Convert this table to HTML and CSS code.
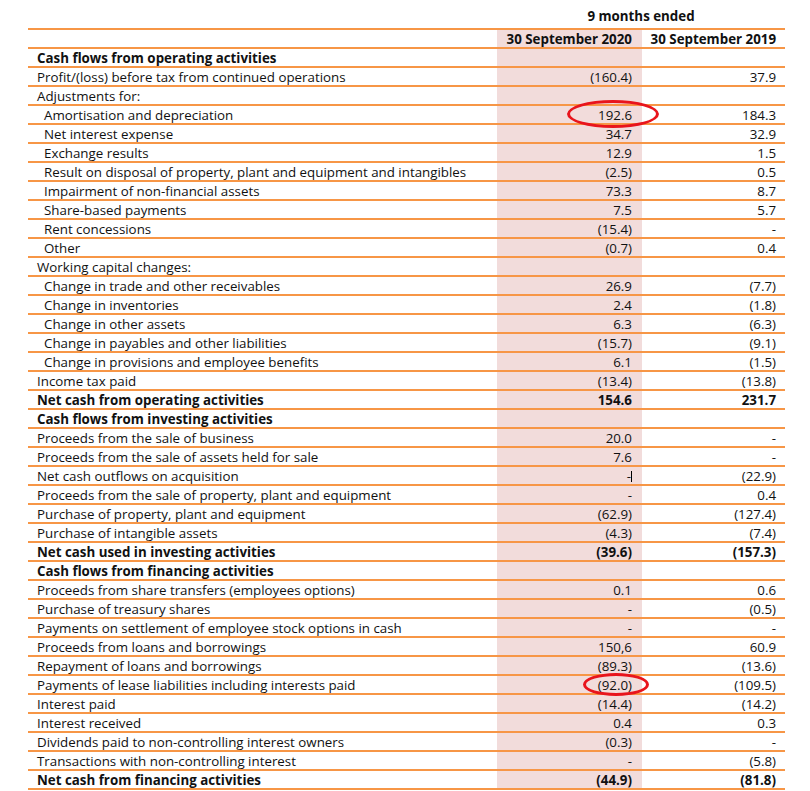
FILE: index.html
```html
<!DOCTYPE html>
<html>
<head>
<meta charset="utf-8">
<link rel="stylesheet" href="styles.css">
</head>
<body>
<div class="page">
<table class="cf">
<colgroup><col class="c-label"><col class="c-cur"><col class="c-prev"></colgroup>
<thead>
<tr class="h1"><th></th><th colspan="2" class="span">9 months ended</th></tr>
<tr class="h2"><th></th><th class="num cur">30 September 2020</th><th class="num">30 September 2019</th></tr>
</thead>
<tbody>
<tr class="b"><td>Cash flows from operating activities</td><td class="cur"></td><td></td></tr>
<tr><td>Profit/(loss) before tax from continued operations</td><td class="num cur">(160.4)</td><td class="num">37.9</td></tr>
<tr><td>Adjustments for:</td><td class="cur"></td><td></td></tr>
<tr><td class="ind">Amortisation and depreciation</td><td class="num cur">192.6</td><td class="num">184.3</td></tr>
<tr><td class="ind">Net interest expense</td><td class="num cur">34.7</td><td class="num">32.9</td></tr>
<tr><td class="ind">Exchange results</td><td class="num cur">12.9</td><td class="num">1.5</td></tr>
<tr><td class="ind">Result on disposal of property, plant and equipment and intangibles</td><td class="num cur">(2.5)</td><td class="num">0.5</td></tr>
<tr><td class="ind">Impairment of non-financial assets</td><td class="num cur">73.3</td><td class="num">8.7</td></tr>
<tr><td class="ind">Share-based payments</td><td class="num cur">7.5</td><td class="num">5.7</td></tr>
<tr><td class="ind">Rent concessions</td><td class="num cur">(15.4)</td><td class="num">-</td></tr>
<tr><td class="ind">Other</td><td class="num cur">(0.7)</td><td class="num">0.4</td></tr>
<tr><td>Working capital changes:</td><td class="cur"></td><td></td></tr>
<tr><td class="ind">Change in trade and other receivables</td><td class="num cur">26.9</td><td class="num">(7.7)</td></tr>
<tr><td class="ind">Change in inventories</td><td class="num cur">2.4</td><td class="num">(1.8)</td></tr>
<tr><td class="ind">Change in other assets</td><td class="num cur">6.3</td><td class="num">(6.3)</td></tr>
<tr><td class="ind">Change in payables and other liabilities</td><td class="num cur">(15.7)</td><td class="num">(9.1)</td></tr>
<tr><td class="ind">Change in provisions and employee benefits</td><td class="num cur">6.1</td><td class="num">(1.5)</td></tr>
<tr><td>Income tax paid</td><td class="num cur">(13.4)</td><td class="num">(13.8)</td></tr>
<tr class="b"><td>Net cash from operating activities</td><td class="num cur">154.6</td><td class="num">231.7</td></tr>
<tr class="b"><td>Cash flows from investing activities</td><td class="cur"></td><td></td></tr>
<tr><td>Proceeds from the sale of business</td><td class="num cur">20.0</td><td class="num">-</td></tr>
<tr><td>Proceeds from the sale of assets held for sale</td><td class="num cur">7.6</td><td class="num">-</td></tr>
<tr><td>Net cash outflows on acquisition</td><td class="num cur caret-cell">-<span class="caret"></span></td><td class="num">(22.9)</td></tr>
<tr><td>Proceeds from the sale of property, plant and equipment</td><td class="num cur">-</td><td class="num">0.4</td></tr>
<tr><td>Purchase of property, plant and equipment</td><td class="num cur">(62.9)</td><td class="num">(127.4)</td></tr>
<tr><td>Purchase of intangible assets</td><td class="num cur">(4.3)</td><td class="num">(7.4)</td></tr>
<tr class="b"><td>Net cash used in investing activities</td><td class="num cur">(39.6)</td><td class="num">(157.3)</td></tr>
<tr class="b"><td>Cash flows from financing activities</td><td class="cur"></td><td></td></tr>
<tr><td>Proceeds from share transfers (employees options)</td><td class="num cur">0.1</td><td class="num">0.6</td></tr>
<tr><td>Purchase of treasury shares</td><td class="num cur">-</td><td class="num">(0.5)</td></tr>
<tr><td>Payments on settlement of employee stock options in cash</td><td class="num cur">-</td><td class="num">-</td></tr>
<tr><td>Proceeds from loans and borrowings</td><td class="num cur">150,6</td><td class="num">60.9</td></tr>
<tr><td>Repayment of loans and borrowings</td><td class="num cur">(89.3)</td><td class="num">(13.6)</td></tr>
<tr><td>Payments of lease liabilities including interests paid</td><td class="num cur">(92.0)</td><td class="num">(109.5)</td></tr>
<tr><td>Interest paid</td><td class="num cur">(14.4)</td><td class="num">(14.2)</td></tr>
<tr><td>Interest received</td><td class="num cur">0.4</td><td class="num">0.3</td></tr>
<tr><td>Dividends paid to non-controlling interest owners</td><td class="num cur">(0.3)</td><td class="num">-</td></tr>
<tr><td>Transactions with non-controlling interest</td><td class="num cur">-</td><td class="num">(5.8)</td></tr>
<tr class="b"><td>Net cash from financing activities</td><td class="num cur">(44.9)</td><td class="num">(81.8)</td></tr>
</tbody>
</table>
<div class="ring ring-1"></div>
<div class="ring ring-2"></div>
</div>
</body>
</html>
```
FILE: styles.css
```css
html, body {
  margin: 0;
  padding: 0;
  background: #ffffff;
}
.page {
  position: relative;
  width: 810px;
  height: 791px;
  padding-left: 28px;
  box-sizing: border-box;
  font-family: "Open Sans", "Liberation Sans", sans-serif;
  font-size: 13.33px;
  color: #111111;
}
.cf {
  border-collapse: separate;
  border-spacing: 0;
  table-layout: fixed;
  width: 757px;
}
.c-label { width: 469px; }
.c-cur { width: 145px; }
.c-prev { width: 143px; }
.cf th, .cf td {
  padding: 1px 0 0 0;
  line-height: 16px;
  white-space: nowrap;
  text-align: left;
  font-weight: normal;
  border-bottom: 2px solid #f79646;
  vertical-align: middle;
}
.cf td:first-child { padding-left: 9px; }
.cf td.ind { padding-left: 16px; }
.cf .num { text-align: right; padding-right: 10px; }
.cf td.num:last-child, .cf th.num:last-child { padding-right: 9px; }
.cf .cur { background: #f2dcdb; }
.cf tr.h1 th {
  font-weight: bold;
  text-align: center;
  padding-top: 4px;
  line-height: 24px;
}
.cf tr.h2 th { font-weight: bold; }
.cf tr.b td { font-weight: bold; }
.caret {
  display: inline-block;
  width: 1px;
  height: 11px;
  background: #000;
  vertical-align: -1px;
}
.ring {
  position: absolute;
  border: 3px solid #e8141c;
  border-radius: 50%;
  box-sizing: border-box;
}
.ring-1 { left: 567px; top: 100px; width: 92px; height: 28px; }
.ring-2 { left: 583px; top: 673px; width: 66px; height: 23px; }
```
